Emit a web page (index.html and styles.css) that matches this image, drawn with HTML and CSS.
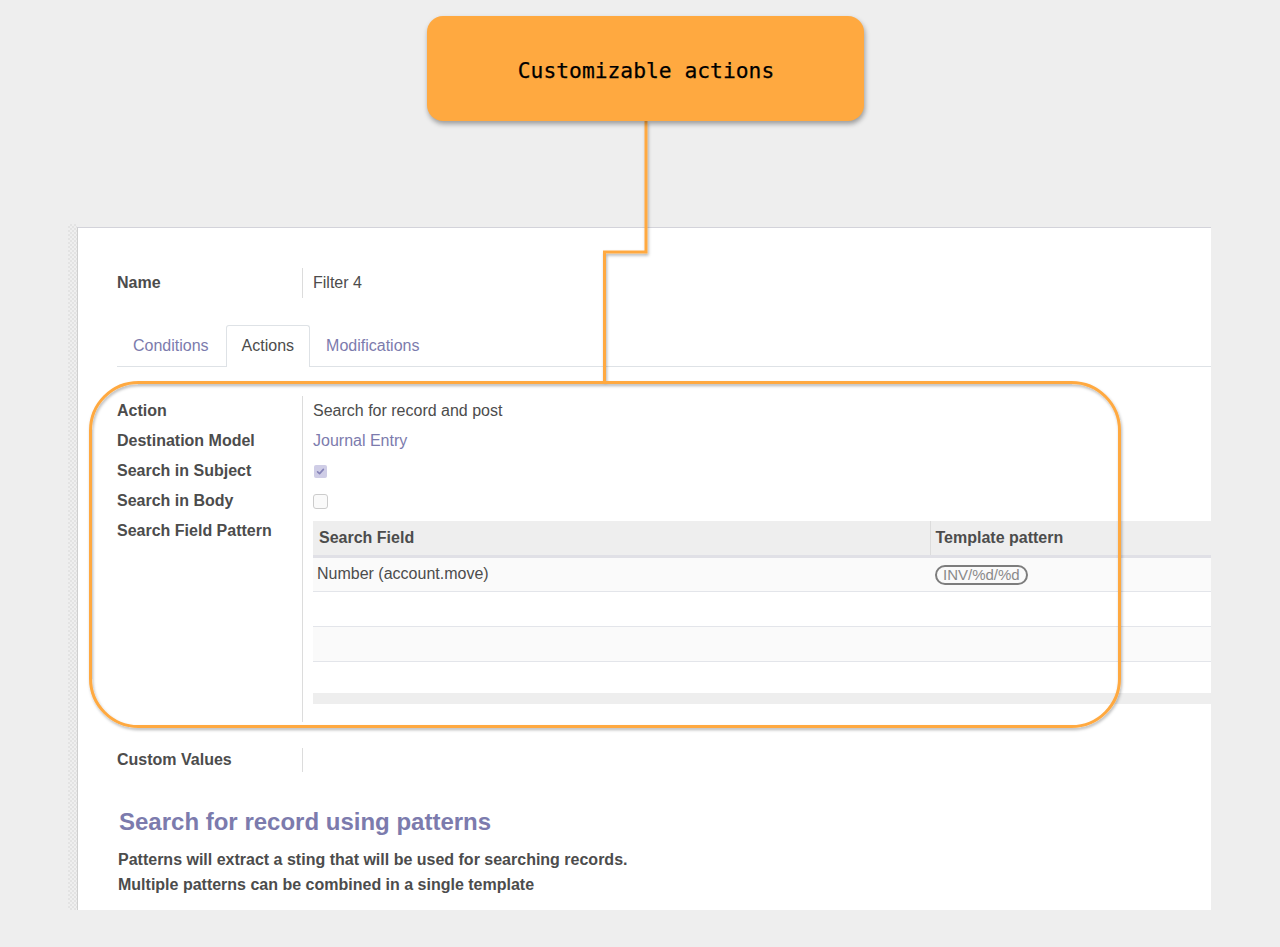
FILE: index.html
```html
<!DOCTYPE html>
<html lang="en">
<head>
<meta charset="utf-8">
<title>Customizable actions</title>
<link rel="stylesheet" href="styles.css">
</head>
<body>
<div class="screen">
  <div class="strip"></div>
  <div class="panel">
    <div class="fields name-group">
      <div class="label">Name</div>
      <div class="value">Filter 4</div>
    </div>

    <div class="tabs">
      <div class="tab">Conditions</div>
      <div class="tab active">Actions</div>
      <div class="tab">Modifications</div>
    </div>

    <div class="fields action-group">
      <div class="label">Action</div>
      <div class="value">Search for record and post</div>
      <div class="label">Destination Model</div>
      <div class="value link">Journal Entry</div>
      <div class="label">Search in Subject</div>
      <div class="value"><span class="check checked"><svg viewBox="0 0 13 13" width="13" height="13"><path d="M3.6 6.8 L5.6 8.6 L9.4 4.4" fill="none" stroke="#8583b8" stroke-width="1.6" stroke-linecap="round" stroke-linejoin="round"/></svg></span></div>
      <div class="label">Search in Body</div>
      <div class="value"><span class="check"></span></div>
      <div class="label">Search Field Pattern</div>
      <div class="value table-cell">
        <table class="grid">
          <thead>
            <tr><th class="c1">Search Field</th><th class="c2">Template pattern</th></tr>
          </thead>
          <tbody>
            <tr class="odd"><td>Number (account.move)</td><td class="pat"><span class="badge">INV/%d/%d</span></td></tr>
            <tr><td></td><td></td></tr>
            <tr class="odd"><td></td><td></td></tr>
            <tr class="last"><td></td><td></td></tr>
          </tbody>
        </table>
        <div class="tfoot"></div>
      </div>
    </div>

    <div class="fields custom-group">
      <div class="label">Custom Values</div>
      <div class="value"></div>
    </div>

    <h2 class="help-title">Search for record using patterns</h2>
    <p class="help-text">Patterns will extract a sting that will be used for searching records.<br>Multiple patterns can be combined in a single template</p>
  </div>
</div>

<svg class="overlay" width="1280" height="947" viewBox="0 0 1280 947">
  <defs>
    <filter id="sh" x="-10%" y="-10%" width="120%" height="130%">
      <feDropShadow dx="1" dy="2" stdDeviation="1.6" flood-color="#000" flood-opacity="0.3"/>
    </filter>
  </defs>
  <g filter="url(#sh)" fill="none" stroke="#ffa940" stroke-width="3">
    <path d="M646 121 V252 H604.5 V383"/>
    <rect x="90.5" y="382.5" width="1029" height="344" rx="48" ry="48"/>
  </g>
</svg>

<div class="callout">Customizable actions</div>
</body>
</html>
```

FILE: styles.css
```css
* { box-sizing: border-box; }

html, body {
  margin: 0;
  padding: 0;
}

body {
  width: 1280px;
  height: 947px;
  background: #eeeeee;
  font-family: "Liberation Sans", Arial, sans-serif;
  font-size: 16px;
  color: #4c4c4c;
  position: relative;
  overflow: hidden;
}

.screen {
  display: flex;
  margin: 224px 0 0 68px;
  width: 1143px;
  height: 686px;
}

.strip {
  width: 9px;
  flex: none;
  background-color: #ececec;
  background-image: conic-gradient(#e3e3e3 25%, #efefef 0 50%, #e3e3e3 0 75%, #efefef 0);
  background-size: 4px 4px;
}

.panel {
  flex: 1;
  margin-top: 3px;
  background: #ffffff;
  border-top: 1px solid #d3d3da;
  border-left: 1px solid #cfcfcf;
  overflow: hidden;
  padding: 40px 0 0 39px;
}

.fields {
  display: grid;
  grid-template-columns: 185px 1fr;
}

.label {
  font-weight: bold;
  line-height: 22px;
  padding: 4px 0;
}

.value {
  border-left: 1px solid #dcdcdc;
  padding: 4px 0 4px 10px;
  line-height: 22px;
  min-height: 30px;
  display: flex;
  align-items: center;
}

.link { color: #7c7bad; }

.tabs {
  display: flex;
  margin-top: 27px;
  border-bottom: 1px solid #dee2e6;
  height: 42px;
}

.tab {
  padding: 0 16px;
  line-height: 41px;
  color: #7c7bad;
}

.tab.active {
  color: #4c4c4c;
  background: #ffffff;
  margin-left: 1px;
  padding: 0 15px;
  border: 1px solid #dee2e6;
  border-bottom: none;
  border-radius: 3px 3px 0 0;
  height: 42px;
  line-height: 40px;
}

.action-group { margin-top: 29px; }

.check {
  width: 15px;
  height: 15px;
  border: 1px solid #cccccc;
  border-radius: 3px;
  background: #fafafa;
  display: inline-block;
}

.check.checked {
  width: 13px;
  height: 13px;
  margin-left: 1px;
  border: none;
  border-radius: 2px;
  background: #cfcde6;
}

.check svg { display: block; }

.table-cell {
  display: block;
  padding: 5px 0 18px 10px;
  overflow: hidden;
}

.grid {
  border-collapse: collapse;
  width: 1000px;
  table-layout: fixed;
}

.grid th {
  background: #eeeeee;
  text-align: left;
  font-weight: bold;
  height: 35px;
  padding: 0 6px;
  border-bottom: 3px solid #e0e0e6;
}

.grid th.c1 { width: 617px; }
.grid th.c2 { border-left: 1px solid #dcdcdc; padding-left: 5px; }

.grid td {
  height: 35px;
  padding: 0 4px;
  border-bottom: 1px solid #e3e5ea;
}

.grid tr.odd td { background: #fafafa; }
.grid tr.last td { height: 32px; border-bottom: none; }

.grid td.pat { padding-left: 5px; }

.badge {
  display: inline-block;
  border: 2px solid #7d7d7d;
  border-radius: 11px;
  color: #8a8a8a;
  font-size: 15px;
  line-height: 16px;
  padding: 0 6px;
  margin-top: 2px;
}

.tfoot {
  height: 11px;
  background: #eeeeee;
}

.custom-group { margin-top: 26px; }

.custom-group .label,
.custom-group .value {
  padding: 0;
  min-height: 24px;
  line-height: 24px;
}

.help-title {
  margin: 35px 0 0 2px;
  font-size: 24px;
  line-height: 29px;
  color: #7c7bad;
  font-weight: bold;
}

.help-text {
  margin: 11px 0 0 1px;
  font-weight: bold;
  line-height: 25px;
}

.overlay {
  position: absolute;
  left: 0;
  top: 0;
  pointer-events: none;
}

.callout {
  position: absolute;
  left: 427px;
  top: 16px;
  width: 437px;
  height: 105px;
  border-radius: 16px;
  background: #ffa940;
  box-shadow: 1px 3px 5px rgba(0, 0, 0, 0.35);
  display: flex;
  align-items: center;
  justify-content: center;
  font-family: "DejaVu Sans Mono", "Liberation Mono", monospace;
  font-size: 21.3px;
  color: #000000;
  padding: 4px 0 0 1px;
  -webkit-text-stroke: 0.25px #000;
}
```
